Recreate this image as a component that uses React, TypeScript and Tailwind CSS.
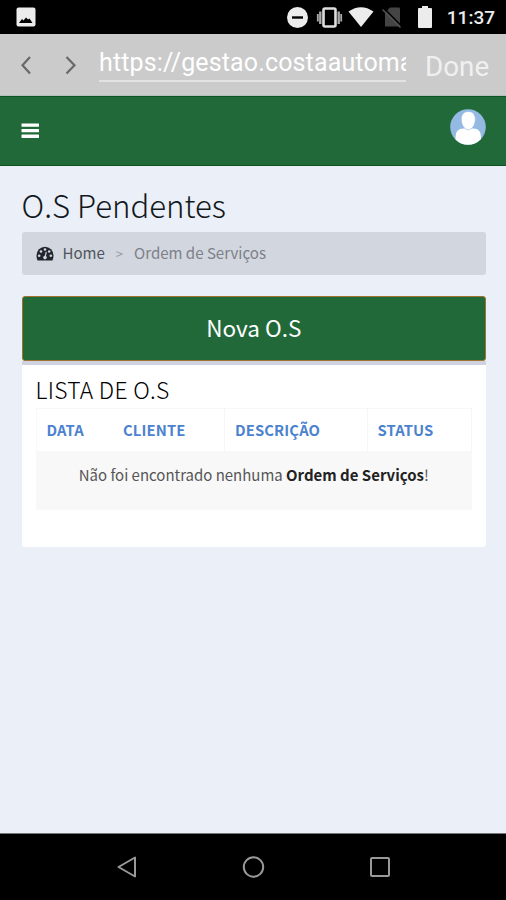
function StatusBar() {
  return (
    <div className="flex h-[34px] shrink-0 items-center bg-black pl-4 pr-[11px] text-[#ececec]">
      <svg className="h-5 w-5" viewBox="0 0 20 20" fill="none">
        <rect x="0.5" y="0.5" width="19" height="19" rx="2" fill="#ececec" />
        <path d="M3 16L6 12L7.5 13.5L10 10.5L12 12.5L13.5 11.5L16.5 16Z" fill="#000" />
      </svg>
      <svg className="ml-[250px] h-[22px] w-[122px]" viewBox="286 6 122 22" fill="none">
        <circle cx="297.5" cy="17.5" r="10.5" fill="#ececec" />
        <path d="M292 17.5H303" stroke="#000" strokeWidth="2.4" />
        <rect x="323.5" y="8.5" width="12" height="18" rx="1.5" stroke="#dedede" strokeWidth="2.6" />
        <path d="M320.3 11.5V24M338.7 11.5V24" stroke="#aaa" strokeWidth="2.4" />
        <path d="M317.8 14V21.5M341.2 14V21.5" stroke="#aaa" strokeWidth="1.8" />
        <path d="M348.5 11.5Q361 3 373.5 11.5L361 27Z" fill="#ececec" />
        <path d="M390 7.5H399Q400 7.5 400 8.5V26.5H385V13Z" fill="#444" />
        <path d="M383.8 8.2L401.8 26.2" stroke="#000" strokeWidth="1.6" />
        <path d="M382.5 9.5L400.5 27.5" stroke="#505050" strokeWidth="1.6" />
      </svg>
      <svg className="ml-[10px] h-[22px] w-[14px]" viewBox="0 0 14 22" fill="currentColor">
        <path d="M4 0H10V2H13Q14 2 14 3V21Q14 22 13 22H1Q0 22 0 21V3Q0 2 1 2H4Z" />
      </svg>
      <span className="ml-auto mt-[2px] font-[Roboto,sans-serif] text-[19px] font-medium leading-[22px]">11:37</span>
    </div>
  );
}

function BrowserBar() {
  return (
    <div className="flex h-[62px] shrink-0 border-b border-[#b5c0b8] bg-[#cbcbcb] pl-5 font-[Roboto,sans-serif]">
      <svg className="mt-[21px] h-5 w-3" viewBox="0 0 12 20" fill="none" stroke="#686868" strokeWidth="2.2">
        <path d="M10 2L2.5 10.2L10 18.5" />
      </svg>
      <svg className="ml-8 mt-[21px] h-5 w-3" viewBox="0 0 12 20" fill="none" stroke="#686868" strokeWidth="2.2">
        <path d="M2.5 2L10.5 10.2L2.5 18.5" />
      </svg>
      <div className="ml-[23px] mt-[12px] h-9 w-[307px] overflow-hidden whitespace-nowrap border-b-2 border-[#e2e2e2] text-[25px] leading-[33px] tracking-[0.14px] text-white">
        https://gestao.costaautoma
      </div>
      <span className="ml-[19px] mt-4 text-[27.8px] leading-[33px] text-[#f0f0f0]">Done</span>
    </div>
  );
}

function SiteHeader() {
  return (
    <header className="flex h-[70px] shrink-0 justify-between border-y border-[#0c5520] bg-[#226939] pl-[21px] pr-5">
      <svg className="mt-[26px] h-4 w-[19px]" viewBox="0 0 19 16" fill="#fff">
        <rect x="0.5" y="0.5" width="17.5" height="3.2" rx="0.5" />
        <rect x="0.5" y="6" width="17.5" height="3.2" rx="0.5" />
        <rect x="0.5" y="11.5" width="17.5" height="3.4" rx="0.5" />
      </svg>
      <svg className="mt-3 h-9 w-9" viewBox="0 0 36 36">
        <defs>
          <clipPath id="avatar"><circle cx="18" cy="18" r="17.8" /></clipPath>
        </defs>
        <g clipPath="url(#avatar)">
          <rect width="36" height="36" fill="#94b9e3" />
          <path d="M5.5 36V28Q5.5 19.5 13.5 19.5H23.5Q31 19.5 31 28V36Z" fill="#fff" />
          <path d="M18.3 2.5C23 2.5 25.5 6 25.3 10.5C25.2 16 22 20.8 18.3 20.8C14.5 20.8 11.4 16 11.3 10.5C11.2 6 13.5 2.5 18.3 2.5Z" fill="#fff" stroke="#94b9e3" strokeWidth="0.6" />
        </g>
      </svg>
    </header>
  );
}

function GaugeIcon() {
  return (
    <svg className="h-[15px] w-[18px]" viewBox="0 0 18 15">
      <path d="M1.5 14.5Q0.5 12.5 0.5 9.5A8.5 8.8 0 0 1 17.5 9.5Q17.5 12.5 16.5 14.5Z" fill="#22262c" />
      <g fill="#d2d6de">
        <circle cx="3.2" cy="9.8" r="1.3" />
        <circle cx="5" cy="5.5" r="1.3" />
        <circle cx="9" cy="3.5" r="1.3" />
        <circle cx="13.2" cy="5.5" r="1.3" />
        <circle cx="14.8" cy="9.8" r="1.3" />
      </g>
      <path d="M10.3 5.8L9.2 10.5" stroke="#d2d6de" strokeWidth="1.2" />
      <circle cx="9" cy="11.6" r="1.8" fill="#d2d6de" />
    </svg>
  );
}

const headings = [
  { label: 'DATA', cell: 'w-[76.5px]' },
  { label: 'CLIENTE', cell: 'w-[112px] border-r' },
  { label: 'DESCRIÇÃO', cell: 'w-[142.5px] border-r' },
  { label: 'STATUS', cell: 'w-[104px] border-r' },
];

function Orders() {
  return (
    <section className="h-[186px] rounded-b-[3px] border-t-4 border-[#d0d3df] bg-white px-[14px]">
      <h2 className="mt-[8px] h-[35px] text-[22.8px] font-light leading-[34px] tracking-[0.3px] text-black">LISTA DE O.S</h2>
      <div className="flex h-[43px] border-l border-t border-[#f8f8f8]">
        {headings.map(({ label, cell }) => (
          <div key={label} className={`${cell} border-[#f5f5f5] pl-[10px] text-[14.8px] font-bold leading-[41px] tracking-[0.12px] text-[#4c82ce]`}>
            {label}
          </div>
        ))}
      </div>
      <p className="h-[59px] whitespace-nowrap bg-[#f8f8f8] pt-[12px] text-center text-[14.97px] leading-6 text-[#555]">
        Não foi encontrado nenhuma <b className="text-[#222]">Ordem de Serviços</b>!
      </p>
    </section>
  );
}

function NavBar() {
  return (
    <nav className="flex h-[67px] shrink-0 items-center justify-center border-t border-[#777] bg-black">
      <svg className="h-6 w-[276px]" viewBox="0 0 276 24" fill="none" stroke="#999" strokeWidth="2">
        <path d="M20 2.5V21.5L3.5 12Z" strokeLinejoin="round" />
        <circle cx="138.5" cy="12" r="9.7" />
        <rect x="256" y="3" width="18" height="18" rx="1" />
      </svg>
    </nav>
  );
}

export default function App() {
  return (
    <div className="flex h-[900px] w-[506px] flex-col overflow-hidden bg-[#ebeff7] font-['Noto_Sans_CJK_SC',sans-serif]">
      <StatusBar />
      <BrowserBar />
      <SiteHeader />
      <main className="flex-1 pl-[21.5px] pr-5">
        <h1 className="mt-[19px] h-[47px] whitespace-nowrap text-[31.2px] font-light leading-10 text-[#111820]">O.S Pendentes</h1>
        <div className="flex h-[43px] items-center rounded-[3px] bg-[#d2d6de] pl-[14px] text-[15.05px] text-[#50545c]">
          <GaugeIcon />
          <div className="flex items-center">
            <span className="ml-[9px]">Home</span>
            <span className="ml-[11px] text-[13px] text-[#989ca5]">&gt;</span>
            <span className="ml-[11px] text-[#7c8088]">Ordem de Serviços</span>
          </div>
        </div>
        <button className="mt-[21px] block h-[65px] w-full rounded-[3px] border-[1.5px] border-[#a0722f] bg-[#226939] pb-[3px] text-[22.5px] leading-8 text-white">
          Nova O.S
        </button>
        <Orders />
      </main>
      <NavBar />
    </div>
  );
}
